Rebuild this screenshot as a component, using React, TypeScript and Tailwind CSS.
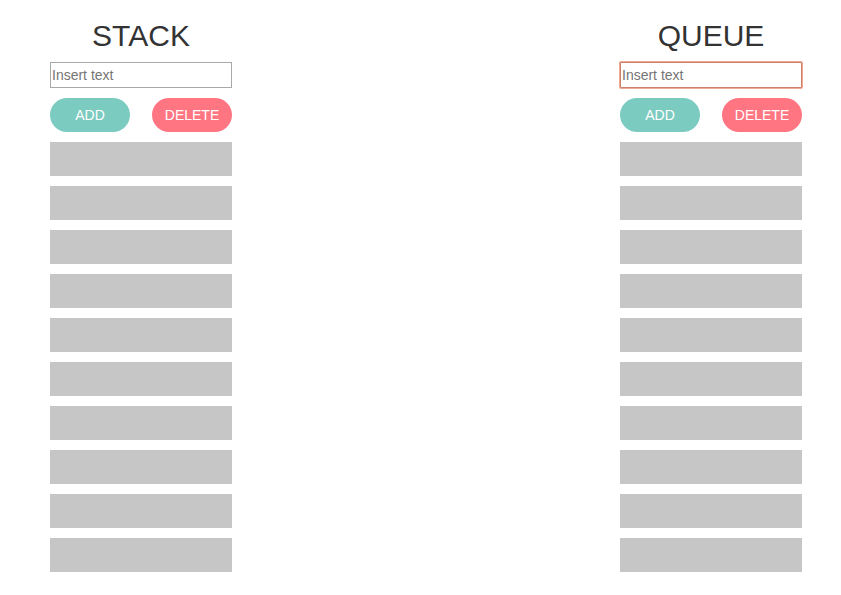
type PanelProps = { title: string; id: string; focused?: boolean };

const SLOTS = Array.from({ length: 10 }, (_, i) => i);

function Panel({ title, id, focused = false }: PanelProps) {
  return (
    <section className="flex w-[182px] flex-col gap-2.5">
      <h1 className="text-center text-[30px] leading-8 font-normal text-[#333333]">
        <label htmlFor={id}>{title}</label>
      </h1>
      <input
        id={id}
        type="text"
        placeholder="Insert text"
        className={
          "h-[26px] w-full border bg-white px-px text-sm text-[#333333] outline-none placeholder:text-[#757575] " +
          (focused ? "rounded-[1px] border-[#cc8069] ring-1 ring-[#f0a994]" : "border-[#a9a9a9]")
        }
      />
      <div className="flex justify-between">
        <button type="button" className="h-[34px] w-20 rounded-full bg-[#7bcbc0] text-sm text-white">
          ADD
        </button>
        <button type="button" className="h-[34px] w-20 rounded-full bg-[#ff7581] text-sm text-white">
          DELETE
        </button>
      </div>
      <ul className="flex flex-col gap-2.5">
        {SLOTS.map((slot) => (
          <li key={slot} className="h-[34px] bg-[#c6c6c6]" />
        ))}
      </ul>
    </section>
  );
}

export default function App() {
  return (
    <main className="flex justify-between gap-5 bg-white pt-5 pr-[39px] pb-5 pl-[50px] font-['Liberation_Sans',Arial,sans-serif]">
      <Panel title="STACK" id="stack-text" />
      <Panel title="QUEUE" id="queue-text" focused />
    </main>
  );
}
